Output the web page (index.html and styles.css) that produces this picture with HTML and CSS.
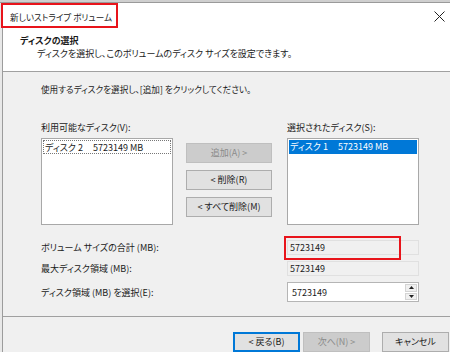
FILE: index.html
```html
<!DOCTYPE html>
<html lang="ja">
<head>
    <meta charset="UTF-8">
    <meta name="viewport" content="width=device-width, initial-scale=1.0">
    <title>新しいストライプ ボリューム</title>
    <link rel="stylesheet" href="styles.css">
</head>
<body>
    <div class="desk"></div>
    <div class="screen">
        <div class="edge"></div>
        <div class="window">
            <div class="titlebar">
                <span class="title">新しいストライプ ボリューム</span>
                <svg class="close" width="11" height="11" viewBox="0 0 11 11">
                    <path d="M0.5 0.5 L10.5 10.5 M10.5 0.5 L0.5 10.5" stroke="#222" stroke-width="1" fill="none"/>
                </svg>
                <div class="mark mark-title"></div>
            </div>

            <div class="header">
                <div class="header-title">ディスクの選択</div>
                <div class="header-sub">ディスクを選択し、このボリュームのディスク サイズを設定できます。</div>
            </div>

            <div class="content">
                <p class="intro">使用するディスクを選択し、[追加] をクリックしてください。</p>

                <div class="pick">
                    <div class="col">
                        <label class="cap">利用可能なディスク(V):</label>
                        <div class="list">
                            <div class="item focus">ディスク 2<span class="size">5723149 MB</span></div>
                        </div>
                    </div>
                    <div class="moves">
                        <button class="btn" disabled>追加(A) &gt;</button>
                        <button class="btn">&lt; 削除(R)</button>
                        <button class="btn">&lt; すべて削除(M)</button>
                    </div>
                    <div class="col">
                        <label class="cap">選択されたディスク(S):</label>
                        <div class="list">
                            <div class="item selected">ディスク 1<span class="size">5723149 MB</span></div>
                        </div>
                    </div>
                </div>

                <div class="sizes">
                    <span class="lbl">ボリューム サイズの合計 (MB):</span>
                    <div class="field ro">5723149<div class="mark mark-field"></div></div>
                    <span class="lbl">最大ディスク領域 (MB):</span>
                    <div class="field ro">5723149</div>
                    <span class="lbl">ディスク領域 (MB) を選択(E):</span>
                    <div class="field spin">
                        <span class="val">5723149</span>
                        <div class="arrows">
                            <span class="arr"><svg width="5" height="3" viewBox="0 0 5 3"><path d="M2.5 0 L5 3 L0 3 Z" fill="#222"/></svg></span>
                            <span class="arr"><svg width="5" height="3" viewBox="0 0 5 3"><path d="M0 0 L5 0 L2.5 3 Z" fill="#222"/></svg></span>
                        </div>
                    </div>
                </div>
            </div>

            <div class="footer">
                <button class="btn default">&lt; 戻る(B)</button>
                <button class="btn" disabled>次へ(N) &gt;</button>
                <button class="btn cancel">キャンセル</button>
            </div>
        </div>
    </div>
</body>
</html>
```

FILE: styles.css
```css
body {
    margin: 0;
    width: 450px;
    height: 352px;
    overflow: hidden;
    background: #f0f0f0;
    font-family: "Noto Sans CJK JP", "Noto Sans", sans-serif;
    font-size: 9px;
    font-feature-settings: "palt";
    color: #1a1a1a;
}
.desk {
    height: 3px;
    background: #cfcfcf;
    border-bottom: 1px solid #9a9a9a;
    box-sizing: border-box;
}
.screen {
    display: flex;
    height: 349px;
}
.edge {
    width: 3px;
    background: #e8e8e8;
    border-right: 1px solid #9c9c9c;
    box-sizing: border-box;
}
.window {
    flex: 1;
    display: flex;
    flex-direction: column;
}
.titlebar {
    position: relative;
    height: 27px;
    background: #fff;
    display: flex;
    align-items: center;
    padding: 0 5px 0 7px;
}
.title {
    font-size: 8.6px;
    color: #222;
}
.close {
    margin-left: auto;
}
.mark {
    position: absolute;
    border: 2px solid #e8141b;
    box-sizing: border-box;
}
.mark-title {
    left: -2px;
    top: 0;
    width: 117px;
    height: 25px;
}
.header {
    background: #fff;
    height: 42px;
    border-bottom: 1px solid #a0a0a0;
    padding: 4px 0 0 17px;
    box-sizing: border-box;
}
.header-title {
    font-weight: bold;
    line-height: 13px;
}
.header-sub {
    padding-left: 17px;
    line-height: 13px;
}
.content {
    height: 245px;
    border-bottom: 1px solid #a0a0a0;
    padding: 11px 0 0 38px;
    box-sizing: border-box;
}
.intro {
    margin: 0;
    line-height: 13px;
    font-size: 8.6px;
}
.pick {
    display: flex;
    margin-top: 25px;
}
.col {
    display: flex;
    flex-direction: column;
    width: 132px;
}
.cap {
    line-height: 13px;
    margin-bottom: 4px;
}
.list {
    height: 87px;
    background: #fff;
    border: 1px solid #a8a8a8;
    box-sizing: border-box;
    padding: 1px;
}
.item {
    height: 14px;
    line-height: 13px;
    padding-left: 1px;
    box-sizing: border-box;
}
.item .size {
    margin-left: 10px;
}
.focus {
    border: 1px dotted #777;
}
.selected {
    background: #0078d7;
    color: #fff;
}
.moves {
    display: flex;
    flex-direction: column;
    gap: 7px;
    width: 86px;
    margin: 22px 15px 0 13px;
}
.btn {
    font: inherit;
    font-feature-settings: "palt";
    color: #1a1a1a;
    background: #e1e1e1;
    border: 1px solid #adadad;
    height: 20px;
    padding: 0;
    line-height: 16px;
}
.btn:disabled {
    background: #cccccc;
    border-color: #bfbfbf;
    color: #8a8a8a;
}
.sizes {
    display: grid;
    grid-template-columns: 246px 132px;
    grid-template-rows: 15px 15px 20px;
    row-gap: 6px;
    margin-top: 15px;
    align-items: center;
}
.lbl {
    line-height: 13px;
}
.field {
    position: relative;
    height: 100%;
    box-sizing: border-box;
    line-height: 13px;
    padding-left: 2px;
}
.ro {
    border: 1px solid #e0e0e0;
}
.mark-field {
    left: -4px;
    top: -5px;
    width: 117px;
    height: 24px;
}
.spin {
    display: flex;
    align-items: center;
    background: #fff;
    border: 1px solid #b5b5b5;
    padding: 0 1px 0 4px;
}
.val {
    flex: 1;
}
.arrows {
    display: flex;
    flex-direction: column;
    gap: 1px;
    width: 12px;
    height: 16px;
}
.arr {
    flex: 1;
    display: flex;
    align-items: center;
    justify-content: center;
    background: #f0f0f0;
    border: 1px solid #d4d4d4;
}
.footer {
    display: flex;
    padding: 15px 0 0 230px;
}
.footer .btn {
    width: 67px;
    height: 20px;
}
.footer .btn:disabled {
    margin-left: 3px;
}
.default {
    border: 2px solid #0078d7;
    line-height: 14px;
}
.cancel {
    margin-left: 12px;
}
```
